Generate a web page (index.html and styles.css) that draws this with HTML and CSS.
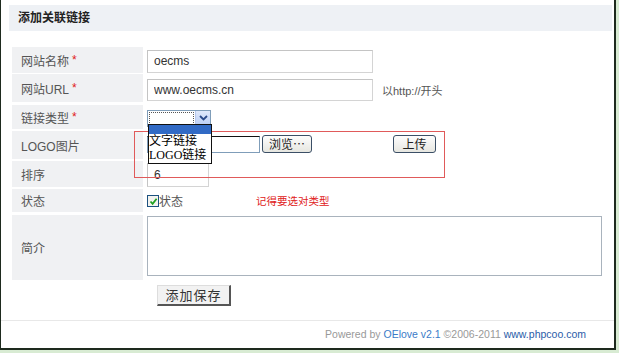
FILE: index.html
```html
<!DOCTYPE html>
<html lang="zh-CN">
<head>
  <meta charset="UTF-8" />
  <title>添加关联链接</title>
  <link rel="stylesheet" href="styles.css">
</head>
<body>
  <div class="frame">
    <div class="panel-head">添加关联链接</div>

    <form class="link-form">
      <div class="row r1">
        <div class="label">网站名称 <span class="req">*</span></div>
        <div class="field"><input class="text wide" type="text" value="oecms"></div>
      </div>
      <div class="row r2">
        <div class="label">网站URL <span class="req">*</span></div>
        <div class="field">
          <input class="text wide" type="text" value="www.oecms.cn">
          <span class="hint">以http://开头</span>
        </div>
      </div>
      <div class="row r3">
        <div class="label">链接类型 <span class="req">*</span></div>
        <div class="field">
          <div class="select">
            <span class="select-box"></span>
            <span class="select-arrow">
              <svg width="9" height="6" viewBox="0 0 9 6"><path d="M1 1 L4.5 4.5 L8 1" fill="none" stroke="#2b4a8a" stroke-width="1.8"/></svg>
            </span>
          </div>
        </div>
      </div>
      <div class="row r4">
        <div class="label">LOGO图片</div>
        <div class="field">
          <span class="file-box"></span>
          <button type="button" class="xp-btn browse">浏览…</button>
          <button type="button" class="xp-btn upload">上传</button>
        </div>
      </div>
      <div class="row r5">
        <div class="label">排序</div>
        <div class="field"><input class="text short" type="text" value="6"></div>
      </div>
      <div class="row r6">
        <div class="label">状态</div>
        <div class="field">
          <span class="check">
            <svg width="9" height="9" viewBox="0 0 9 9"><path d="M1.5 4.5 L3.6 6.8 L7.6 1.8" fill="none" stroke="#21a121" stroke-width="1.8"/></svg>
          </span>状态
          <span class="warn">记得要选对类型</span>
        </div>
      </div>
      <div class="row r7">
        <div class="label">简介</div>
        <div class="field"><textarea class="intro"></textarea></div>
      </div>
      <div class="actions">
        <button type="button" class="save">添加保存</button>
      </div>

      <!-- open dropdown + red annotation box lie over the rows -->
      <ul class="dropdown">
        <li class="hl"></li>
        <li>文字链接</li>
        <li>LOGO链接</li>
      </ul>
      <div class="mark"></div>
    </form>

    <div class="footer">
      Powered by <span class="brand">OElove v2.1</span> ©2006-2011 <span class="site">www.phpcoo.com</span>
    </div>
  </div>
</body>
</html>
```

FILE: styles.css
```css
* {
  box-sizing: border-box;
  margin: 0;
  padding: 0;
}

body {
  background: #d8ebd3;
  font-family: 'Liberation Sans', 'Noto Sans CJK SC', sans-serif;
  font-size: 12px;
  color: #555;
}

.frame {
  width: 616px;
  height: 350px;
  background: #fff;
  border-left: 1px solid #1e2a1e;
  border-right: 2px solid #1e2a1e;
  border-bottom: 2px solid #1e2a1e;
  padding-top: 5px;
}

.panel-head {
  margin: 0 2px 0 8px;
  height: 26px;
  line-height: 26px;
  padding-left: 9px;
  background: #eef1f5;
  color: #222;
  font-weight: bold;
  font-size: 12px;
}

.link-form {
  position: relative;
  margin: 16px 0 0 11px;
}

.row {
  display: flex;
  margin-bottom: 2px;
}

.r1 { height: 26px; margin-bottom: 1px; }
.r2 { height: 28px; margin-bottom: 3px; }
.r3 { height: 24px; }
.r4 { height: 28px; }
.r5 { height: 26px; }
.r6 { height: 23px; margin-bottom: 3px; }
.r7 { height: 65px; }

.label {
  width: 131px;
  flex-shrink: 0;
  background: #f0f1f3;
  padding-left: 9px;
  display: flex;
  align-items: center;
  color: #555;
}

.req {
  color: #e02020;
  margin-left: 3px;
}

.field {
  flex: 1;
  padding-left: 4px;
  display: flex;
  align-items: center;
  position: relative;
}

.text {
  height: 23px;
  border: 1px solid #d4d4d4;
  border-top-color: #c4c4c4;
  border-left-color: #c4c4c4;
  padding-left: 6px;
  font: 12px 'Liberation Sans', sans-serif;
  color: #333;
  background: #fff;
}

.r1 .text { margin-top: 2px; }
.r2 .text { height: 22px; margin-top: 4px; }

.wide { width: 226px; }
.short { width: 62px; height: 24px; margin-top: 2px; }

.hint {
  margin-left: 9px;
  margin-top: 4px;
  color: #555;
  font-size: 11px;
}

.select {
  display: flex;
  width: 64px;
  height: 17px;
  border: 1px solid #7f9db9;
  margin-top: 2px;
  background: #fff;
}

.select-box {
  flex: 1;
  border: 1px dotted #555;
  margin: 1px;
}

.select-arrow {
  width: 15px;
  background: linear-gradient(#dfe8fb, #b9cdf5);
  border-left: 1px solid #b7c9ee;
  display: flex;
  align-items: center;
  justify-content: center;
}

.file-box {
  width: 113px;
  height: 17px;
  border: 1px solid #7f9db9;
  border-top-color: #111;
  margin-top: -2px;
}

.xp-btn {
  height: 18px;
  border: 1px solid #3b4f66;
  border-radius: 3px;
  background: linear-gradient(#fdfdfd, #e6e6e0);
  font: 12px 'Noto Sans CJK SC', sans-serif;
  color: #222;
  line-height: 14px;
  margin-top: -2px;
}

.browse {
  width: 50px;
  margin-left: 2px;
}

.upload {
  width: 43px;
  margin-left: 81px;
}

.check {
  width: 12px;
  height: 12px;
  border: 1px solid #1c5180;
  background: #f3f3ef;
  display: inline-flex;
  align-items: center;
  justify-content: center;
  margin-top: 1px;
}

.r6 .field {
  color: #555;
}

.warn {
  color: #e02020;
  margin-left: 73px;
  font-size: 10.5px;
}

.intro {
  width: 455px;
  height: 60px;
  border: 1px solid #a9b3bd;
  margin-top: -4px;
  resize: none;
}

.actions {
  padding-left: 145px;
  margin-top: 5px;
}

.save {
  width: 74px;
  height: 21px;
  background: #f2f2f2;
  border: 1px solid #ddd;
  border-right: 2px solid #555;
  border-bottom: 2px solid #555;
  font: 13px 'Noto Sans CJK SC', sans-serif;
  color: #333;
  letter-spacing: 1px;
  line-height: 16px;
}

.dropdown {
  position: absolute;
  left: 136px;
  top: 77px;
  width: 64px;
  height: 40px;
  list-style: none;
  background: #fff;
  border: 1px solid #111;
  font: 12px 'Liberation Serif', 'Noto Sans CJK SC', serif;
  color: #000;
  z-index: 2;
}

.dropdown li {
  height: 14px;
  line-height: 14px;
  white-space: nowrap;
}

.dropdown li.hl {
  height: 9px;
  background: #316ac5;
}

.mark {
  position: absolute;
  left: 122px;
  top: 84px;
  width: 311px;
  height: 47px;
  border: 1px solid #e05a5a;
  z-index: 1;
}

.footer {
  margin-top: 14px;
  border-top: 1px solid #e8e8e8;
  text-align: right;
  padding: 7px 28px 0 0;
  font: 10.5px 'Liberation Sans', sans-serif;
  color: #999;
}

.brand {
  color: #3a7bc8;
}

.site {
  color: #2a5da8;
}
```
